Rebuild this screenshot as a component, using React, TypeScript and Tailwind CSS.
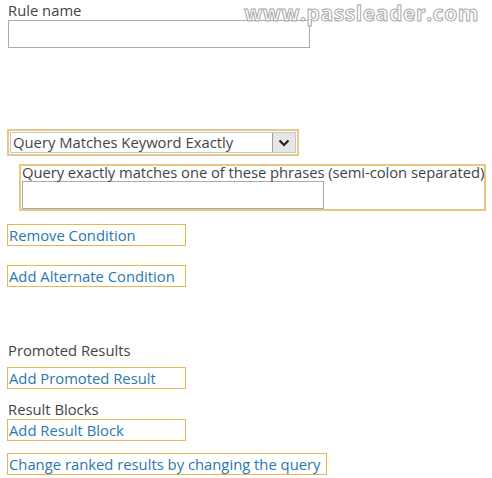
const linkBox =
  'h-[22px] border border-[#e8b650] pl-[1px] flex items-center text-[#2a78b0] leading-none';

function LinkBox({ label, width, className = '' }: { label: string; width: string; className?: string }) {
  return (
    <div className={`${linkBox} ${width} ${className}`}>
      <span>{label}</span>
    </div>
  );
}

export default function App() {
  return (
    <div
      className="relative w-[492px] h-[478px] bg-white overflow-hidden text-[14.8px] text-[#444]"
      style={{ fontFamily: '"Open Sans", "Noto Sans", sans-serif' }}
    >
      {/* watermark */}
      <div className="absolute top-[2px] right-[13px] leading-[22px] text-[21px] font-bold tracking-[0.6px] text-white [-webkit-text-stroke:1px_#a8a8a8]">
        www.passleader.com
      </div>

      <div className="flex flex-col pt-[2px] pl-[7px]">
        <div className="h-[16px] leading-[16px] pl-[1px]">Rule name</div>
        <div className="mt-[2px] ml-[1px] w-[302px] h-[28px] border border-[#ababab] bg-white" />

        {/* condition type */}
        <div className="mt-[81px] w-[292px] h-[27px] border-2 border-[#e4c88c] p-[1px]">
          <div className="h-full flex items-center border border-[#c8c8c8] bg-white">
            <span className="flex-1 pl-[2px] leading-none">Query Matches Keyword Exactly</span>
            <div className="w-[23px] h-full bg-[#e6e6e6] border-l border-[#a0a0a0] flex items-center justify-center">
              <svg width="12" height="8" viewBox="0 0 12 8">
                <path d="M1.5 1.5 L6 6 L10.5 1.5" fill="none" stroke="#222" strokeWidth="2.2" />
              </svg>
            </div>
          </div>
        </div>

        <div className="mt-[8px] ml-[12px] w-[467px] h-[47px] border-2 border-[#e8c880] pl-[1px]">
          <div className="h-[15px] leading-[13px] whitespace-nowrap tracking-[-0.06px]">
            Query exactly matches one of these phrases (semi-colon separated)
          </div>
          <div className="w-[302px] h-[28px] border border-[#ababab] bg-white" />
        </div>

        <LinkBox label="Remove Condition" width="w-[179px]" className="mt-[13px]" />
        <LinkBox label="Add Alternate Condition" width="w-[179px]" className="mt-[19px]" />

        <div className="mt-[55px] h-[16px] leading-[16px] pl-[1px]">Promoted Results</div>
        <LinkBox label="Add Promoted Result" width="w-[179px]" className="mt-[9px]" />

        <div className="mt-[12px] h-[16px] leading-[16px] pl-[1px]">Result Blocks</div>
        <LinkBox label="Add Result Block" width="w-[179px]" className="mt-[2px]" />

        <LinkBox label="Change ranked results by changing the query" width="w-[320px]" className="mt-[12px]" />
      </div>
    </div>
  );
}
